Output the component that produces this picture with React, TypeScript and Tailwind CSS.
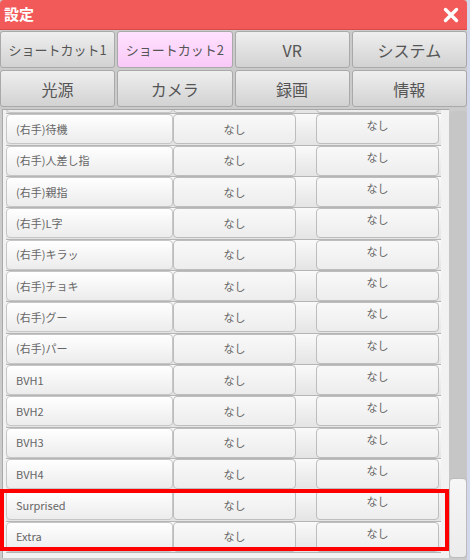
import React from "react";

const font = { fontFamily: '"Noto Sans CJK JP", "Noto Sans", sans-serif' };

const tabs1 = ["ショートカット1", "ショートカット2", "VR", "システム"];
const tabs2 = ["光源", "カメラ", "録画", "情報"];

const rows = [
  "",
  "(右手)待機",
  "(右手)人差し指",
  "(右手)親指",
  "(右手)L字",
  "(右手)キラッ",
  "(右手)チョキ",
  "(右手)グー",
  "(右手)パー",
  "BVH1",
  "BVH2",
  "BVH3",
  "BVH4",
  "Surprised",
  "Extra",
];

function Tab({ label, active, big }: { label: string; active?: boolean; big?: boolean }) {
  return (
    <div
      className={`h-[37px] flex items-center justify-center rounded-[3px] border border-[#a9a9a9] text-[#555] ${
        active
          ? "bg-gradient-to-b from-[#ffe2ff] to-[#f9c9f8]"
          : "bg-gradient-to-b from-[#efefef] to-[#d2d2d2]"
      } ${big ? "text-[16px]" : label.length > 4 ? "text-[13px]" : "text-[16px]"}`}
    >
      {label}
    </div>
  );
}

function Row({ label }: { label: string }) {
  const blank = label === "";
  return (
    <div className="h-[31.35px] shrink-0 flex border-b border-[#b5b5b5] bg-gradient-to-b from-[#fafafa] to-[#e4e4e4]">
      <div className="w-[167px] h-[30px] flex items-center pl-[9px] rounded-[4px] border border-[#c6c6c6] bg-gradient-to-b from-white to-[#ececec] text-[11px] text-[#666]">
        {label}
      </div>
      <div className="w-[123px] h-[30px] flex items-center justify-center rounded-[4px] border border-[#bdbdbd] bg-gradient-to-b from-[#f9f9f9] to-[#ededed] text-[11px] text-[#666]">
        {blank ? "" : "なし"}
      </div>
      <div className="w-[20px]" />
      <div className="w-[123px] h-[30px] flex justify-center pt-[2px] rounded-[4px] border border-[#bdbdbd] bg-gradient-to-b from-[#f9f9f9] to-[#ededed] text-[11px] text-[#666]">
        {blank ? "" : "なし"}
      </div>
    </div>
  );
}

export default function App() {
  return (
    <div className="relative w-[470px] h-[560px] overflow-hidden bg-[#d3d7ec]" style={font}>
      <div className="w-[467px] h-full flex flex-col bg-[#cbcbcb]">
        <div className="h-[30px] shrink-0 flex items-center justify-between pl-[4px] pr-[8px] rounded-t-[4px] bg-[#f25a5a] border-b border-[#d84a4a]">
          <span className="text-white text-[15px] font-bold">設定</span>
          <svg width="16" height="16" viewBox="0 0 16 16">
            <path d="M2.5 2.5 L13.5 13.5 M13.5 2.5 L2.5 13.5" stroke="white" strokeWidth="3.4" strokeLinecap="round" />
          </svg>
        </div>
        <div className="mt-[1px] grid grid-cols-4 gap-x-[2px] gap-y-[2px]">
          {tabs1.map((t, i) => (
            <Tab key={t} label={t} active={i === 1} />
          ))}
          {tabs2.map((t) => (
            <Tab key={t} label={t} big />
          ))}
        </div>
        <div className="mt-[2px] flex-1 flex min-h-0 pb-[2px]">
          <div className="w-[447px] ml-[2px] border-l border-t border-[#a9a9a9] bg-[#f2f2f2] flex flex-col justify-end overflow-hidden pl-[3px] pr-[8px] pb-[5px]">
            {rows.map((r, i) => (
              <Row key={i} label={r} />
            ))}
          </div>
          <div className="w-[18px] mt-[2px] flex flex-col rounded-tl-[6px] rounded-tr-[3px] bg-[#c6c6c6]">
            <div className="flex-1" />
            <div className="h-[80px] rounded-[4px] border border-[#bcbcbc] bg-gradient-to-b from-[#f6f6f6] to-[#ececec]" />
          </div>
        </div>
      </div>
      <div className="absolute left-0 top-[489px] w-[449px] h-[62px] border-4 border-[#ff0000]" />
    </div>
  );
}
